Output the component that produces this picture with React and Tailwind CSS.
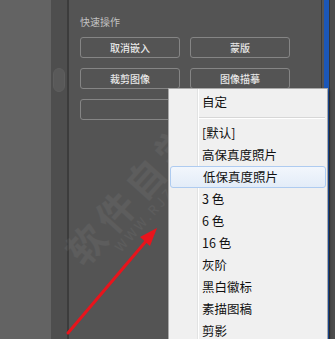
import React from 'react';

const items = ['[默认]', '高保真度照片', '低保真度照片', '3 色', '6 色', '16 色', '灰阶', '黑白徽标', '素描图稿', '剪影'];

function Btn({ label }) {
  return (
    <button className="w-[100px] h-[21px] rounded-[3px] border border-[#858585] bg-[#545454] text-[10px] font-medium text-[#e8e8e8] leading-none">
      {label}
    </button>
  );
}

export default function App() {
  return (
    <div
      className="relative w-[335px] h-[339px] overflow-hidden flex bg-[#545454]"
      style={{ fontFamily: '"Noto Sans CJK SC", "Noto Sans", sans-serif' }}
    >
      {/* left panel */}
      <div className="w-[51px] bg-[#636363]" />
      {/* scroll strip */}
      <div className="w-[16px] bg-[#4e4e4e] pt-[68px] px-[2px]">
        <div className="h-[24px] rounded-[6px] bg-[#595959] border border-[#5e5e5e]" />
      </div>
      <div className="w-[2px] bg-[#3c3c3c]" />

      {/* main panel */}
      <div className="flex-1 pl-[11px] pt-[15px]">
        <div className="text-[10px] leading-[14px] text-[#c2c2c2]">快速操作</div>
        <div className="mt-[8px] flex flex-col gap-[10px]">
          <div className="flex gap-[10px]">
            <Btn label="取消嵌入" />
            <Btn label="蒙版" />
          </div>
          <div className="flex gap-[10px]">
            <Btn label="裁剪图像" />
            <Btn label="图像描摹" />
          </div>
          <div className="flex gap-[10px]">
            <Btn label="" />
          </div>
        </div>
      </div>

      {/* right edge */}
      <div className="w-[1px] bg-[#3a3a3a]" />
      <div className="w-[2px] bg-[#555555]" />
      <div className="w-[5px] bg-[#1b57b8]" />
      <div className="w-[1px] bg-[#363636]" />
      <div className="w-[5px] bg-[#4c4c4c]" />

      {/* watermark */}
      <div className="absolute left-[78px] top-[236px] -rotate-[48deg] origin-left pointer-events-none select-none whitespace-nowrap">
        <div className="text-[38px] font-bold leading-none text-white/[0.05] tracking-[6px]">软件自学网</div>
        <div className="text-[13px] leading-none text-white/[0.05] tracking-[3px] ml-[36px] mt-[2px]">WWW.RJZXW.COM</div>
      </div>

      {/* dropdown menu */}
      <div className="absolute left-[168px] top-[88px] w-[160px] h-[270px] bg-[#f0f0f0] border border-[#a9a9a9] shadow-[2px_2px_3px_rgba(0,0,0,0.3)] pt-[2px] text-[12.5px] text-[#111]">
        <div className="absolute left-[28px] top-0 bottom-0 w-[1px] bg-[#e2e3e3]" />
        <div className="absolute left-[29px] top-0 bottom-0 w-[1px] bg-white" />
        <div className="relative h-[22px] flex items-center pl-[33px]">自定</div>
        <div className="relative h-[9px] flex flex-col justify-center pl-[30px] pr-[2px]">
          <div className="h-[1px] bg-[#d7d7d7]" />
          <div className="h-[1px] bg-white" />
        </div>
        {items.map((t, i) => (
          <div
            key={t}
            className={
              i === 2
                ? 'relative h-[22px] mx-[1px] flex items-center pl-[32px] rounded-[3px] border border-[#aecbf0] bg-gradient-to-b from-[#f2f6fc] to-[#e3ecf8]'
                : 'relative h-[22px] flex items-center pl-[33px]'
            }
          >
            {t}
          </div>
        ))}
      </div>

      {/* red arrow */}
      <svg className="absolute left-0 top-0 pointer-events-none" width="335" height="339">
        <line x1="68" y1="333" x2="147" y2="240" stroke="#e8141c" strokeWidth="3" strokeLinecap="round" />
        <polygon points="157,228 140,237 150,246" fill="#e8141c" />
      </svg>
    </div>
  );
}
